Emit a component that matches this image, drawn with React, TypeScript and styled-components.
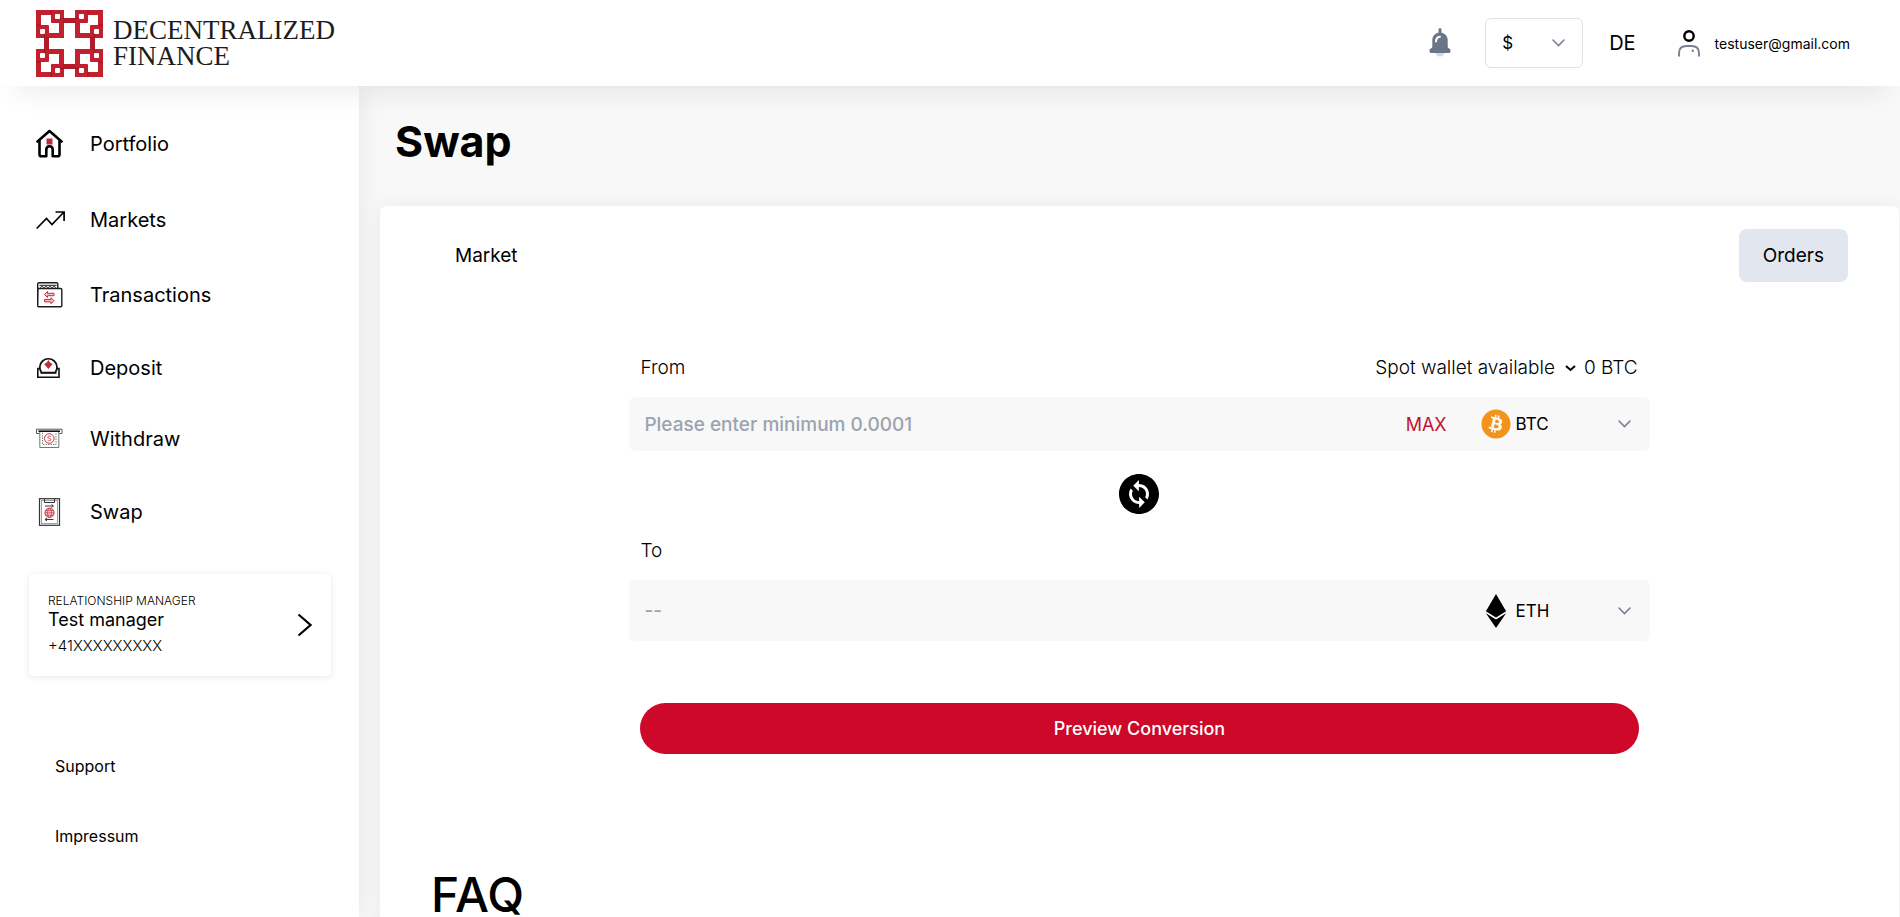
import React from 'react';
import styled, { createGlobalStyle } from 'styled-components';
import { FaBitcoin, FaEthereum } from 'react-icons/fa';
import { MdChangeCircle } from 'react-icons/md';

const GlobalStyle = createGlobalStyle`
  *, *::before, *::after { box-sizing: border-box; }
  body {
    margin: 0;
    background: #f8f8f8;
    color: #000;
    font-family: Inter, "Open Sans", sans-serif;
  }
  button, input, select { font: inherit; color: inherit; }
  a { color: inherit; text-decoration: none; }
`;

const Shell = styled.div`
  display: flex;
  flex-direction: column;
  height: 100vh;
`;

/* Header */

const Header = styled.header`
  position: relative;
  z-index: 2;
  display: flex;
  align-items: center;
  justify-content: space-between;
  flex: none;
  height: 86px;
  padding: 0 50px 0 36px;
  background: #fff;
  box-shadow: 0 24px 26px -16px rgba(0, 0, 0, 0.07);
`;

const Brand = styled.a`
  display: flex;
  align-items: center;
  gap: 10px;
  color: #1c1c1c;
  font-family: "Liberation Serif", serif;
  font-size: 27px;
  line-height: 26px;
`;

const BrandLine = styled.span`
  display: block;
`;

const HeaderTools = styled.div`
  display: flex;
  align-items: center;
`;

const BellButton = styled.button`
  display: flex;
  margin-right: 34px;
  padding: 0;
  border: 0;
  background: none;
  cursor: pointer;
`;

const SelectWrap = styled.span`
  position: relative;
  display: inline-flex;
  align-items: center;
`;

const SelectArrow = styled.svg<{ $right: number }>`
  position: absolute;
  right: ${p => p.$right}px;
  pointer-events: none;
`;

const FiatSelect = styled.select`
  appearance: none;
  width: 98px;
  height: 50px;
  padding: 0 16px;
  border: 1px solid #e2e2e6;
  border-radius: 6px;
  background: #fff;
  font-size: 17px;
`;

const LanguageButton = styled.button`
  margin: 0 42px 0 26px;
  padding: 0;
  border: 0;
  background: none;
  font-size: 20px;
  cursor: pointer;
`;

const Account = styled.a`
  display: flex;
  align-items: center;
  gap: 15px;
  font-size: 14px;
`;

/* Sidebar */

const Body = styled.div`
  display: flex;
  flex: 1;
  min-height: 0;
`;

const Sidebar = styled.aside`
  position: relative;
  z-index: 1;
  flex: none;
  width: 359px;
  padding: 19px 28px 0 29px;
  background: #fff;
  box-shadow: 0 0 24px rgba(0, 0, 0, 0.08);
`;

const Nav = styled.nav`
  display: flex;
  flex-direction: column;
`;

const NavItem = styled.a`
  display: flex;
  align-items: center;
  padding: 24px 7px;
  font-size: 20px;
  line-height: 22px;
`;

const NavIcon = styled.span`
  display: flex;
  width: 54px;
`;

const ManagerCard = styled.a`
  display: flex;
  align-items: center;
  justify-content: space-between;
  height: 102px;
  margin-top: 24px;
  padding: 0 19px;
  border-radius: 4px;
  background: #fff;
  box-shadow: 0 1px 6px rgba(0, 0, 0, 0.1);
`;

const ManagerRole = styled.div`
  font-size: 12px;
  font-weight: 300;
  line-height: 16px;
`;

const ManagerName = styled.div`
  font-size: 18px;
  line-height: 22px;
`;

const ManagerPhone = styled.div`
  margin-top: 4px;
  font-size: 15px;
  font-weight: 300;
  line-height: 22px;
`;

const FooterLinks = styled.div`
  display: flex;
  flex-direction: column;
  gap: 50px;
  margin-top: 80px;
  padding-left: 26px;
  font-size: 16px;
  line-height: 20px;
`;

/* Main */

const Main = styled.main`
  flex: 1;
  min-width: 0;
  padding: 30px 1px 0 21px;
  overflow-y: auto;
  scrollbar-width: none;
`;

const PageTitle = styled.h1`
  margin: 0 0 40px 15px;
  font-size: 43px;
  font-weight: 700;
  line-height: 50px;
`;

const Card = styled.section`
  padding: 23px 51px 40px;
  border-radius: 6px;
  background: #fff;
  box-shadow: 0 0 20px rgba(0, 0, 0, 0.06);
`;

const Tabs = styled.div`
  display: flex;
  justify-content: space-between;
`;

const Tab = styled.button<{ $filled?: boolean }>`
  height: 53px;
  padding: 0 24px;
  border: 0;
  border-radius: 8px;
  background: ${p => (p.$filled ? '#e2e6ee' : 'transparent')};
  font-size: 19px;
  cursor: pointer;
`;

const SwapForm = styled.form`
  display: flex;
  flex-direction: column;
  width: 72%;
  margin: 72px auto 0;
`;

const LabelRow = styled.div`
  display: flex;
  align-items: center;
  justify-content: space-between;
  margin-bottom: 15px;
  padding: 0 12px 0 11px;
  font-size: 19px;
  font-weight: 300;
  line-height: 28px;
`;

const Available = styled.div`
  display: flex;
  align-items: center;
  gap: 8px;
`;

const WalletSelect = styled.select`
  appearance: none;
  field-sizing: content;
  padding: 0 21px 0 0;
  border: 0;
  background: none;
`;

const Field = styled.div<{ $tall?: boolean }>`
  display: flex;
  align-items: center;
  height: ${p => (p.$tall ? 61 : 54)}px;
  padding: 0 18px 0 15px;
  border-radius: 6px;
  background: #f8f8f8;
`;

const AmountInput = styled.input`
  flex: 1;
  min-width: 0;
  padding: 0;
  border: 0;
  outline: 0;
  background: none;
  font-size: 19px;
  font-weight: 500;
  &::placeholder { color: #9ca3af; opacity: 1; }
`;

const MaxButton = styled.button`
  margin-right: 34px;
  padding: 0;
  border: 0;
  background: none;
  color: #c4122f;
  font-size: 18px;
  cursor: pointer;
`;

const CoinIcon = styled.span`
  display: flex;
  justify-content: center;
  width: 30px;
  margin-right: 5px;
`;

const CoinSelect = styled.select`
  appearance: none;
  width: 116px;
  padding: 0;
  border: 0;
  background: none;
  font-size: 17px;
`;

const FlipButton = styled.button`
  display: flex;
  align-self: center;
  margin: 23px 0;
  padding: 0;
  border: 0;
  border-radius: 50%;
  background: none;
  cursor: pointer;
`;

const SubmitButton = styled.button`
  height: 51px;
  margin: 62px 11px 0;
  border: 0;
  border-radius: 26px;
  background: #cd0829;
  color: #fff;
  font-size: 18px;
  font-weight: 500;
  cursor: pointer;
`;

const FaqTitle = styled.h2`
  margin: 111px 0 0;
  font-size: 48px;
  font-weight: 500;
  line-height: 60px;
`;

/* Drawings */

const Knot = ({ transform }: { transform?: string }) => (
  <g transform={transform}>
    <rect x="2.5" y="2.5" width="23" height="23" fill="none" stroke="#c3202f" strokeWidth="5" />
    <rect x="15" width="13" height="13" rx="1" fill="#c3202f" />
    <rect y="15" width="13" height="13" rx="1" fill="#c3202f" />
    <rect x="19" y="4" width="5" height="5" rx="1" fill="#fff" />
    <rect x="4" y="19" width="5" height="5" rx="1" fill="#fff" />
    <rect x="27" y="8" width="7" height="5" fill="#b01c29" />
    <rect x="8" y="27" width="5" height="7" fill="#b01c29" />
    <path d="M15 .5v4M24 8.5h4M.5 15h4M8.5 24v4" stroke="#8f1620" strokeWidth="1" />
  </g>
);

const LogoMark = () => (
  <svg width="67" height="67" viewBox="0 0 67 67" aria-hidden="true">
    <Knot />
    <Knot transform="matrix(-1 0 0 1 67 0)" />
    <Knot transform="matrix(1 0 0 -1 0 67)" />
    <Knot transform="matrix(-1 0 0 -1 67 67)" />
  </svg>
);

const BellIcon = () => (
  <svg width="22" height="30" viewBox="0 0 22 30" aria-hidden="true">
    <path d="M6.500 24h9a4.500 4.500 0 0 1-9 0z" fill="#d5d9e2" />
    <path d="M9.500 1.500a1.500 1.500 0 0 1 3 0v3.200c3.800.7 6.200 3.600 6.200 7.300v6.500c0 1 .5 1.500 1.300 2 1.200.7 1.500 1.300 1.500 2.500 0 1.400-.8 2-2 2h-17c-1.200 0-2-.6-2-2 0-1.200.3-1.800 1.500-2.500.8-.5 1.300-1 1.300-2V12c0-3.700 2.400-6.600 6.200-7.300z" fill="#6b7588" />
    <path d="M7 13.500c0-2.600 1.400-4.500 4-4.800" fill="none" stroke="#fff" strokeWidth="2" strokeLinecap="round" />
  </svg>
);

const UserIcon = () => (
  <svg width="22" height="27" viewBox="0 0 22 27" fill="none" aria-hidden="true">
    <circle cx="11" cy="6" r="4.700" stroke="#000" strokeWidth="2.400" />
    <path d="M1 26.500v-3.500c0-4.600 3-7 7.500-7h5c4.500 0 7.500 2.400 7.500 7v3.500" stroke="#77808f" strokeWidth="1.900" />
    <circle cx="14.800" cy="20.800" r="1.200" fill="#77808f" />
  </svg>
);

const HomeIcon = () => (
  <svg width="28" height="29" viewBox="0 0 28 29" fill="none" aria-hidden="true">
    <path d="M1.500 12.500 13.500 2l12 10.500M3.500 11v14.500c0 1.200.6 1.800 1.800 1.800h5v-6.500c0-2.200 1.200-3.500 3.200-3.500s3.200 1.300 3.200 3.500v6.500h5c1.200 0 1.800-.6 1.800-1.800V11" stroke="#000" strokeWidth="2.600" strokeLinejoin="round" strokeLinecap="round" />
    <rect x="10.500" y="9.500" width="6" height="6" fill="#b5303a" />
  </svg>
);

const MarketsIcon = () => (
  <svg width="30" height="27" viewBox="0 0 30 27" fill="none" stroke="#000" strokeWidth="1.700" aria-hidden="true">
    <path d="M.700 22.500 10.500 12.500l5.500 6L27.500 6.500M19.500 6h8.600v9" />
  </svg>
);

const TransactionsIcon = () => (
  <svg width="27" height="27" viewBox="0 0 27 27" fill="none" aria-hidden="true">
    <path d="M1.700 25V3c0-.8.500-1.300 1.300-1.300h17.500c.8 0 1.300.5 1.300 1.300v4.500M2 7.500h22.800c.6 0 1 .400 1 1v16.200c0 .600-.400 1-1 1H2.700c-.600 0-1-.400-1-1z" stroke="#1c1c1c" strokeWidth="1.400" />
    <path d="M4.500 7c.3-2.200 2.700-2.200 3 0m1 0c.3-2.200 2.700-2.200 3 0m1 0c.3-2.200 2.700-2.200 3 0m1 0c.3-2.200 2.700-2.200 3 0M3.500 4.300h17" stroke="#1c1c1c" />
    <path d="M8.500 13.500l3-3v1.800H18v2.400h-6.500v1.800zM18 19.700l-3-3v1.800H8.500v2.400H15v1.800z" fill="#f2c4c6" stroke="#c6323b" strokeWidth="1" />
  </svg>
);

const DepositIcon = () => (
  <svg width="25" height="23" viewBox="0 0 25 23" fill="none" aria-hidden="true">
    <path d="M5.500 16.500a8.600 8.600 0 1 1 13.800 0z" stroke="#111" strokeWidth="1.700" />
    <path d="M4 12.500H1.800v8.700h21.200v-8.700h-2.200M4.500 17h16" stroke="#111" strokeWidth="1.600" />
    <path d="M12.400 4l1.400 2.300 2.900 1.900-1.300 1.200-3 3.600-3-3.600-1.300-1.200L11 6.300z" fill="#b5303a" />
  </svg>
);

const WithdrawIcon = () => (
  <svg width="27" height="23" viewBox="0 0 27 23" fill="none" aria-hidden="true">
    <path d="M.500 6.500V2.200h25.500v4.300h-2.500M3.500 6.500h-3" stroke="#555" />
    <path d="M2.500 4.200h21.500" stroke="#111" strokeWidth="1.600" />
    <path d="M3.800 5v15.500h19V5" stroke="#777" />
    <path d="M6.500 5.500v12h13.500v-12" stroke="#888" strokeDasharray="1.500 1" />
    <circle cx="13.300" cy="11.500" r="4.800" stroke="#c6323b" />
    <path d="M15 9.600c-1-.9-3.300-.6-3.300.7 0 1.500 3.300.8 3.300 2.300 0 1.300-2.400 1.600-3.400.6" stroke="#c6323b" strokeWidth=".8" />
  </svg>
);

const SwapIcon = () => (
  <svg width="27" height="28" viewBox="0 0 27 28" fill="none" aria-hidden="true">
    <rect x="3.500" y=".700" width="20" height="26.600" stroke="#333" strokeWidth="1.200" />
    <rect x="5.500" y="2.500" width="16" height="23" stroke="#888" strokeWidth=".8" />
    <path d="M8.500 1v3.500h10V1" stroke="#333" />
    <path d="M9 8h8m-1.500-1.500L17.500 8l-2 1.500M17.500 21.500h-8M11 20l-2 1.500 2 1.500" stroke="#222" strokeWidth=".9" />
    <circle cx="13.500" cy="14.800" r="4.600" fill="#f3cfd0" stroke="#c6323b" />
    <ellipse cx="13.500" cy="14.800" rx="2" ry="4.600" stroke="#c6323b" strokeWidth=".7" />
    <path d="M9 14.800h9M9.700 12.400h7.600M9.700 17.200h7.600" stroke="#c6323b" strokeWidth=".7" />
  </svg>
);

const ChevronRight = () => (
  <svg width="15" height="24" viewBox="0 0 15 24" fill="none" aria-hidden="true">
    <path d="M1.500 1.500 13.500 12l-12 10.500" stroke="#000" strokeWidth="2.200" />
  </svg>
);

const DropArrow = ({ right = 1 }: { right?: number }) => (
  <SelectArrow $right={right} width="13" height="8" viewBox="0 0 13 8" fill="none" aria-hidden="true">
    <path d="M1 1l5.500 5.500L12 1" stroke="#7a8090" strokeWidth="1.600" strokeLinecap="round" />
  </SelectArrow>
);

const navItems = [
  { label: 'Portfolio', icon: <HomeIcon /> },
  { label: 'Markets', icon: <MarketsIcon /> },
  { label: 'Transactions', icon: <TransactionsIcon /> },
  { label: 'Deposit', icon: <DepositIcon /> },
  { label: 'Withdraw', icon: <WithdrawIcon /> },
  { label: 'Swap', icon: <SwapIcon /> },
];

export default function App() {
  return (
    <Shell>
      <GlobalStyle />
      <Header>
        <Brand href="#">
          <LogoMark />
          <span>
            <BrandLine>DECENTRALIZED</BrandLine>
            <BrandLine>FINANCE</BrandLine>
          </span>
        </Brand>
        <HeaderTools>
          <BellButton type="button" aria-label="Notifications">
            <BellIcon />
          </BellButton>
          <SelectWrap>
            <FiatSelect aria-label="Currency" defaultValue="$">
              <option>$</option>
            </FiatSelect>
            <DropArrow right={18} />
          </SelectWrap>
          <LanguageButton type="button">DE</LanguageButton>
          <Account href="#account">
            <UserIcon />
            testuser@gmail.com
          </Account>
        </HeaderTools>
      </Header>
      <Body>
        <Sidebar>
          <Nav>
            {navItems.map(({ label, icon }) => (
              <NavItem key={label} href={`#${label.toLowerCase()}`}>
                <NavIcon>{icon}</NavIcon>
                {label}
              </NavItem>
            ))}
          </Nav>
          <ManagerCard href="#manager">
            <div>
              <ManagerRole>RELATIONSHIP MANAGER</ManagerRole>
              <ManagerName>Test manager</ManagerName>
              <ManagerPhone>+41XXXXXXXXX</ManagerPhone>
            </div>
            <ChevronRight />
          </ManagerCard>
          <FooterLinks>
            <a href="#support">Support</a>
            <a href="#impressum">Impressum</a>
          </FooterLinks>
        </Sidebar>
        <Main>
          <PageTitle>Swap</PageTitle>
          <Card>
            <Tabs>
              <Tab type="button">Market</Tab>
              <Tab type="button" $filled>Orders</Tab>
            </Tabs>
            <SwapForm onSubmit={e => e.preventDefault()}>
              <LabelRow>
                <label htmlFor="from-amount">From</label>
                <Available>
                  <SelectWrap>
                    <WalletSelect aria-label="Wallet" defaultValue="Spot wallet available">
                      <option>Spot wallet available</option>
                    </WalletSelect>
                    <SelectArrow $right={0} width="11" height="7" viewBox="0 0 11 7" fill="none" aria-hidden="true">
                      <path d="M1 1l4.500 4L10 1" stroke="#000" strokeWidth="2" />
                    </SelectArrow>
                  </SelectWrap>
                  <span>0 BTC</span>
                </Available>
              </LabelRow>
              <Field>
                <AmountInput id="from-amount" placeholder="Please enter minimum 0.0001" />
                <MaxButton type="button">MAX</MaxButton>
                <CoinIcon>
                  <FaBitcoin size={30} color="#f2941c" />
                </CoinIcon>
                <SelectWrap>
                  <CoinSelect aria-label="From coin" defaultValue="BTC">
                    <option>BTC</option>
                  </CoinSelect>
                  <DropArrow />
                </SelectWrap>
              </Field>
              <FlipButton type="button" aria-label="Switch direction">
                <MdChangeCircle size={40} viewBox="2 2 20 20" />
              </FlipButton>
              <LabelRow>
                <label htmlFor="to-amount">To</label>
              </LabelRow>
              <Field $tall>
                <AmountInput id="to-amount" placeholder="--" />
                <CoinIcon>
                  <FaEthereum size={34} />
                </CoinIcon>
                <SelectWrap>
                  <CoinSelect aria-label="To coin" defaultValue="ETH">
                    <option>ETH</option>
                  </CoinSelect>
                  <DropArrow />
                </SelectWrap>
              </Field>
              <SubmitButton type="submit">Preview Conversion</SubmitButton>
            </SwapForm>
            <FaqTitle>FAQ</FaqTitle>
          </Card>
        </Main>
      </Body>
    </Shell>
  );
}
